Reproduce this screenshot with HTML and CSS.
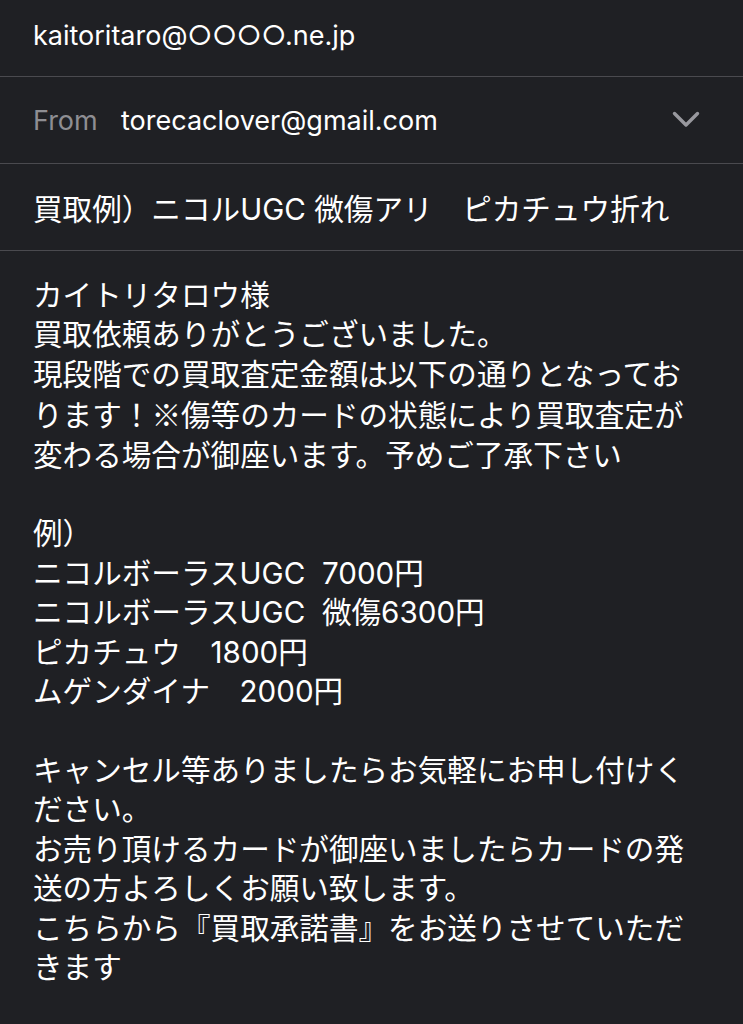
FILE: index.html
```html
<!DOCTYPE html>
<html lang="ja">
<head>
<meta charset="utf-8">
<title>Mail</title>
<link rel="stylesheet" href="styles.css">
</head>
<body>
<div class="mail">
  <div class="row row-to"><span class="addr">kaitoritaro@○○○○.ne.jp</span></div>
  <div class="row row-from">
    <span class="label">From</span>
    <span class="addr">torecaclover@gmail.com</span>
    <svg class="chevron" width="28" height="18" viewBox="0 0 28 18"><path d="M2.5 2.5 L14 14 L25.5 2.5" fill="none" stroke="#98989e" stroke-width="3.4" stroke-linecap="round" stroke-linejoin="round"/></svg>
  </div>
  <div class="row row-subject"><span class="subject">買取例）ニコルUGC 微傷アリ　ピカチュウ折れ</span></div>
  <div class="body">
    <p>カイトリタロウ様<br>買取依頼ありがとうございました。<br>現段階での買取査定金額は以下の通りとなっております！<span class="cjk">※</span>傷等のカードの状態により買取査定が変わる場合が御座います。予めご了承下さい<br><br>例）<br>ニコルボーラスUGC&nbsp;&nbsp;7000円<br>ニコルボーラスUGC&nbsp;&nbsp;微傷6300円<br>ピカチュウ　1800円<br>ムゲンダイナ　2000円<br><br>キャンセル等ありましたらお気軽にお申し付けください。<br>お売り頂けるカードが御座いましたらカードの発送の方よろしくお願い致します。<br>こちらから『買取承諾書』をお送りさせていただきます</p>
  </div>
</div>
</body>
</html>
```

FILE: styles.css
```css
html, body {
  margin: 0;
  padding: 0;
  background: #1f2024;
}
body {
  width: 743px;
  height: 1024px;
  overflow: hidden;
  font-family: "Inter", "Noto Sans CJK JP", sans-serif;
  color: #ffffff;
}
.mail {
  display: flex;
  flex-direction: column;
}
.row {
  display: flex;
  align-items: center;
  padding: 0 33px;
  border-bottom: 1.5px solid #4a4a4f;
  height: 86px;
  box-sizing: border-box;
  font-size: 27px;
}
.row-to {
  height: 77px;
  padding-bottom: 6px;
}
.row-from {
  height: 87px;
}
.row-subject {
  height: 87px;
}
.label {
  color: #8e8e93;
  width: 88px;
  flex: none;
}
.addr {
  flex: none;
}
.chevron {
  margin-left: auto;
  margin-right: 10px;
}
.subject {
  font-size: 29.6px;
  white-space: nowrap;
}
.body {
  padding: 25px 33px 0;
  font-size: 29.6px;
  line-height: 39.4px;
}
.body p {
  margin: 0;
}
.cjk {
  font-family: "Noto Sans CJK JP", sans-serif;
}
```
